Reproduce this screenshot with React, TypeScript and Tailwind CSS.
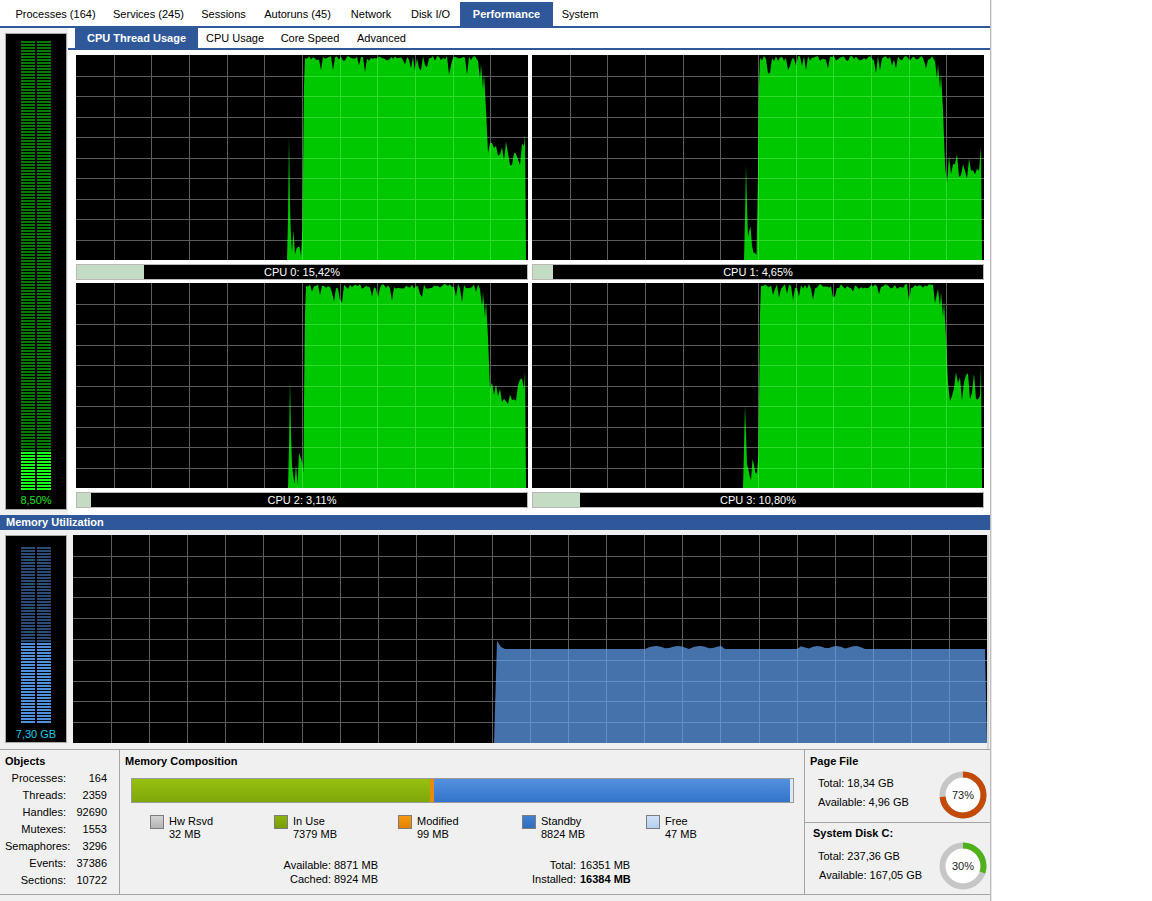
import { useMemo } from "react";

const topTabs = [
	{ label: "Processes (164)", w: "w-[97px]" },
	{ label: "Services (245)", w: "w-[89px]" },
	{ label: "Sessions", w: "w-[61px]" },
	{ label: "Autoruns (45)", w: "w-[87px]" },
	{ label: "Network", w: "w-[60px]" },
	{ label: "Disk I/O", w: "w-[59px]" },
	{ label: "Performance", w: "w-[93px]", active: true },
	{ label: "System", w: "w-[54px]" },
];

const subTabs = [
	{ label: "CPU Thread Usage", w: "w-[123px]", active: true },
	{ label: "CPU Usage", w: "w-[74px]" },
	{ label: "Core Speed", w: "w-[76px]" },
	{ label: "Advanced", w: "w-[67px]" },
];

type Cfg = { seed: number; spike: number; spikeY: number; rise: number; drop: number; tail: number };

const cpus: { name: string; pct: number; cfg: Cfg }[] = [
	{ name: "CPU 0", pct: 15.42, cfg: { seed: 11, spike: 213, spikeY: 81, rise: 228, drop: 409, tail: 102 } },
	{ name: "CPU 1", pct: 4.65, cfg: { seed: 29, spike: 214, spikeY: 110, rise: 227, drop: 410, tail: 114 } },
	{ name: "CPU 2", pct: 3.11, cfg: { seed: 47, spike: 214, spikeY: 97, rise: 229, drop: 411, tail: 110 } },
	{ name: "CPU 3", pct: 10.8, cfg: { seed: 83, spike: 213, spikeY: 122, rise: 228, drop: 413, tail: 104 } },
];

function rng(seed: number) {
	let s = seed * 9973 + 1;
	return () => {
		s = (s * 16807) % 2147483647;
		return (s - 1) / 2147483646;
	};
}

function toPts(p: number[][]) {
	return p.map(([x, y]) => `${x.toFixed(1)},${y.toFixed(1)}`).join(" ");
}

function cpuPoints(c: Cfg) {
	const r = rng(c.seed);
	const H = 205;
	const p: number[][] = [
		[c.spike - 2, H],
		[c.spike - 1, H - 40],
		[c.spike, c.spikeY],
		[c.spike + 1, 150],
		[c.spike + 2, 182],
	];
	for (let x = c.spike + 3; x < c.rise - 1; x += 1.5) p.push([x, 168 + r() * 34]);
	p.push([c.rise - 1, 120], [c.rise, 30], [c.rise + 1, 3]);
	for (let x = c.rise + 3; x < c.drop - 8; x += 2) {
		const y = r() < 0.14 ? 8 + r() * 12 : 1 + r() * 5;
		p.push([x, y]);
	}
	p.push(
		[c.drop - 7, 6],
		[c.drop - 5, 24],
		[c.drop - 4, 9],
		[c.drop - 2, 34],
		[c.drop - 1, 18],
		[c.drop + 1, 55],
		[c.drop + 3, c.tail - 4],
	);
	for (let x = c.drop + 5; x < 449; x += 2) p.push([x, c.tail - 15 + r() * 30]);
	p.push([449, c.tail - 22], [450, H]);
	return toPts(p);
}

function memPoints() {
	const H = 208;
	const p: number[][] = [
		[421, H],
		[424, 106],
		[428, 112],
	];
	for (let x = 432; x <= 914; x += 4) {
		let y = 114;
		if (x > 575 && x < 650) y = 114 - 3 * Math.abs(Math.sin(x / 7));
		if (x > 725 && x < 790) y = 114 - 3 * Math.abs(Math.sin(x / 6));
		p.push([x, y]);
	}
	p.push([914, H]);
	return toPts(p);
}

function Grid({ w, h, cols, rows, color }: { w: number; h: number; cols: number; rows: number; color: string }) {
	return (
		<>
			{Array.from({ length: cols - 1 }, (_, i) => (
				<rect key={"v" + i} x={Math.round(((i + 1) * w) / cols)} y={0} width={1} height={h} fill={color} />
			))}
			{Array.from({ length: rows - 1 }, (_, i) => (
				<rect key={"h" + i} x={0} y={Math.round(((i + 1) * h) / rows)} width={w} height={1} fill={color} />
			))}
		</>
	);
}

function AreaGraph({
	id,
	w,
	h,
	cols,
	points,
	fill,
	line,
}: {
	id: string;
	w: number;
	h: number;
	cols: number;
	points: string;
	fill: string;
	line: string;
}) {
	return (
		<svg width={w} height={h} className="block bg-black">
			<defs>
				<clipPath id={id}>
					<polygon points={points} />
				</clipPath>
			</defs>
			<Grid w={w} h={h} cols={cols} rows={10} color="#5c5c5c" />
			<polygon points={points} fill={fill} />
			<g clipPath={`url(#${id})`}>
				<Grid w={w} h={h} cols={cols} rows={10} color={line} />
			</g>
		</svg>
	);
}

function Meter({ rows, lit, on, off }: { rows: number; lit: number; on: string; off: string }) {
	return (
		<div className="flex flex-col">
			{Array.from({ length: rows }, (_, i) => {
				const c = i >= rows - lit ? on : off;
				return (
					<div key={i} className="flex gap-[2px] h-[2px] mb-[1px]">
						<div className={`w-[14px] ${c}`} />
						<div className={`w-[14px] ${c}`} />
					</div>
				);
			})}
		</div>
	);
}

function Donut({ pct, color }: { pct: number; color: string }) {
	const r = 20.5;
	const c = 2 * Math.PI * r;
	return (
		<div className="relative w-[48px] h-[48px]">
			<svg width={48} height={48} className="block">
				<circle cx={24} cy={24} r={r} fill="#fff" stroke="#c6c6c6" strokeWidth={6} />
				<circle
					cx={24}
					cy={24}
					r={r}
					fill="none"
					stroke={color}
					strokeWidth={6}
					strokeDasharray={`${(c * pct) / 100} ${c}`}
					transform="rotate(-90 24 24)"
				/>
			</svg>
			<div className="absolute inset-0 flex items-center justify-center text-[11px] text-[#222]">{pct}%</div>
		</div>
	);
}

const objects = [
	["Processes:", "164"],
	["Threads:", "2359"],
	["Handles:", "92690"],
	["Mutexes:", "1553"],
	["Semaphores:", "3296"],
	["Events:", "37386"],
	["Sections:", "10722"],
];

const legend = [
	{ label: "Hw Rsvd", val: "32 MB", box: "bg-gradient-to-b from-[#d4d4d4] to-[#b4b4b4]" },
	{ label: "In Use", val: "7379 MB", box: "bg-gradient-to-b from-[#8db20e] to-[#789e08]" },
	{ label: "Modified", val: "99 MB", box: "bg-gradient-to-b from-[#f59a10] to-[#e48200]" },
	{ label: "Standby", val: "8824 MB", box: "bg-gradient-to-b from-[#3f80d0] to-[#316fc0]" },
	{ label: "Free", val: "47 MB", box: "bg-gradient-to-b from-[#d2e2f6] to-[#b4cdee]" },
];

export default function App() {
	const cpuPts = useMemo(() => cpus.map((c) => cpuPoints(c.cfg)), []);
	const memPts = useMemo(() => memPoints(), []);

	return (
		<div className="flex w-[1152px] h-[901px] overflow-hidden bg-white text-[11px] text-black font-['Liberation_Sans',Arial,sans-serif]">
			<div className="w-[990px] flex flex-col bg-[#f0f0f0]">
				{/* top tabs */}
				<div className="flex h-[28px] border-b-2 border-[#2e5899] bg-white pl-[7px]">
					{topTabs.map((t) => (
						<div
							key={t.label}
							className={`${t.w} h-[24px] mt-[2px] flex items-center justify-center whitespace-nowrap ${
								t.active ? "bg-[#2e5899] text-white font-bold" : ""
							}`}
						>
							{t.label}
						</div>
					))}
				</div>

				{/* cpu section */}
				<div className="flex h-[487px]">
					<div className="w-[68px] pl-[5px] pt-[5px]">
						<div className="w-[62px] h-[477px] bg-black border border-[#a8a8a8] flex flex-col items-center pt-[7px]">
							<Meter rows={150} lit={13} on="bg-[#1aff1a]" off="bg-[#087a08]" />
							<div className="mt-[2px] h-[14px] leading-[14px] text-[#22e022]">8,50%</div>
						</div>
					</div>
					<div className="flex-1 bg-white">
						<div className="flex h-[22px] border-b-2 border-[#2e5899] pl-[7px]">
							{subTabs.map((t) => (
								<div
									key={t.label}
									className={`${t.w} h-[20px] flex items-center justify-center whitespace-nowrap ${
										t.active ? "bg-[#2e5899] text-white font-bold" : ""
									}`}
								>
									{t.label}
								</div>
							))}
						</div>
						<div className="grid grid-cols-[452px_452px] gap-x-[4px] gap-y-[3px] pl-[8px] pt-[5px]">
							{cpus.map((c, i) => (
								<div key={c.name} className="flex flex-col gap-[4px]">
									<AreaGraph
										id={"cpu" + i}
										w={452}
										h={205}
										cols={12}
										points={cpuPts[i]}
										fill="#00c800"
										line="#30dc30"
									/>
									<div className="relative h-[16px] bg-black border border-[#b8b8b8]">
										<div
											className="absolute left-0 top-0 bottom-0 bg-[#c3dcc3]"
											style={{ width: `${(c.pct * 435) / 100}px` }}
										/>
										<div className="absolute inset-0 flex items-center justify-center text-white">
											{c.name}: {c.pct.toFixed(2).replace(".", ",")}%
										</div>
									</div>
								</div>
							))}
						</div>
					</div>
				</div>

				{/* memory header */}
				<div className="h-[15px] bg-[#2e5899] text-white font-bold pl-[6px] flex items-center">
					Memory Utilization
				</div>

				{/* memory section */}
				<div className="flex h-[219px] pl-[5px] pt-[5px] gap-[6px]">
					<div className="w-[62px] h-[208px] bg-black border border-[#a8a8a8] flex flex-col items-center pt-[11px]">
						<Meter rows={59} lit={27} on="bg-[#5090de]" off="bg-[#2b4a74]" />
						<div className="mt-[3px] h-[14px] leading-[14px] text-[#1ecbea]">7,30 GB</div>
					</div>
					<div className="border-r-2 border-[#d6d6d6]">
						<AreaGraph id="mem" w={914} h={208} cols={24} points={memPts} fill="#4572aa" line="#6290c6" />
					</div>
				</div>

				{/* bottom panels */}
				<div className="flex h-[146px] border-y border-[#a4a4a4]">
					<div className="w-[120px] border-r border-[#a4a4a4] pl-[5px] pt-[5px]">
						<div className="font-bold h-[13px] leading-[13px]">Objects</div>
						<div className="mt-[2px]">
							{objects.map(([k, v]) => (
								<div key={k} className="flex h-[17px] items-center">
									<div className="w-[61px] text-right">{k}</div>
									<div className="w-[41px] text-right">{v}</div>
								</div>
							))}
						</div>
					</div>

					<div className="w-[685px] border-r border-[#a4a4a4] pl-[5px] pt-[5px]">
						<div className="font-bold h-[13px] leading-[13px]">Memory Composition</div>
						<div className="ml-[6px] mt-[10px] w-[663px] h-[25px] border border-[#9a9a9a] flex">
							<div className="w-[298px] bg-gradient-to-b from-[#97c010] to-[#7fa70a]" />
							<div className="w-[4px] bg-[#e98a0b]" />
							<div className="w-[356px] bg-gradient-to-b from-[#5391de] to-[#3373cb]" />
							<div className="flex-1 bg-[#dce8f6]" />
						</div>
						<div className="flex ml-[25px] mt-[12px]">
							{legend.map((l) => (
								<div key={l.label} className="w-[124px] flex gap-[5px]">
									<div className={`w-[14px] h-[14px] border border-[#7c7c7c] ${l.box}`} />
									<div className="leading-[13px]">
										<div>{l.label}</div>
										<div>{l.val}</div>
									</div>
								</div>
							))}
						</div>
						<div className="grid grid-cols-[206px_100px_145px_auto] mt-[17px] leading-[14px]">
							<div className="text-right">Available:</div>
							<div className="pl-[3px]">8871 MB</div>
							<div className="text-right">Total:</div>
							<div className="pl-[4px]">16351 MB</div>
							<div className="text-right">Cached:</div>
							<div className="pl-[3px]">8924 MB</div>
							<div className="text-right">Installed:</div>
							<div className="pl-[4px] font-bold">16384 MB</div>
						</div>
					</div>

					<div className="flex-1 flex flex-col">
						<div className="h-[73px] border-b border-[#a4a4a4] flex">
							<div className="flex-1 pt-[5px]">
								<div className="font-bold h-[13px] leading-[13px] pl-[5px]">Page File</div>
								<div className="pl-[13px] mt-[8px] leading-[14px]">Total: 18,34 GB</div>
								<div className="pl-[13px] mt-[5px] leading-[14px]">Available: 4,96 GB</div>
							</div>
							<div className="mt-[21px] mr-[3px]">
								<Donut pct={73} color="#c24a06" />
							</div>
						</div>
						<div className="flex-1 flex">
							<div className="flex-1 pt-[4px]">
								<div className="font-bold h-[13px] leading-[13px] pl-[8px]">System Disk C:</div>
								<div className="pl-[13px] mt-[9px] leading-[14px]">Total: 237,36 GB</div>
								<div className="pl-[14px] mt-[5px] leading-[14px]">Available: 167,05 GB</div>
							</div>
							<div className="mt-[19px] mr-[3px]">
								<Donut pct={30} color="#4fb21a" />
							</div>
						</div>
					</div>
				</div>
			</div>
			<div className="w-[1px] bg-[#bcbcbc]" />
			<div className="w-[1px] bg-[#e6e6e6]" />
			<div className="flex-1 bg-white" />
		</div>
	);
}
